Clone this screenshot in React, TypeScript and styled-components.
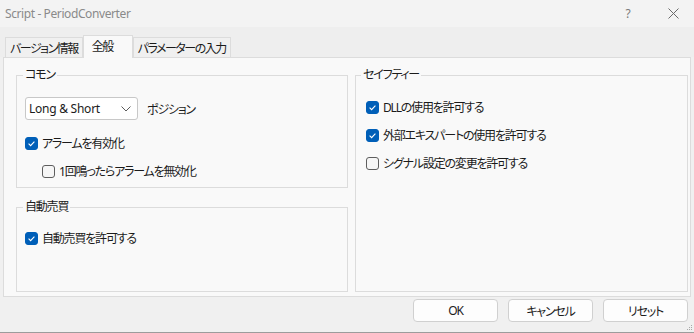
import React from 'react'
import styled, { createGlobalStyle } from 'styled-components'

const GlobalStyle = createGlobalStyle`
    html, body {
        margin: 0;
        padding: 0;
        background: #f0f0f0;
    }
    body {
        font-family: 'Noto Sans', 'Noto Sans CJK JP', sans-serif;
        font-size: 12px;
        color: #1b1b1b;
        font-feature-settings: 'palt';
        letter-spacing: -1.2px;
    }
`

function CheckMark() {
    return (
        <svg width='13' height='13' viewBox='0 0 13 13'>
            <path d='M3.6 6.7 L5.6 8.6 L9.4 4.6' fill='none' stroke='#fff' strokeWidth='1.1' />
        </svg>
    )
}

function Check(props: { checked?: boolean; label: string; top?: number; indent?: number }) {
    return (
        <CheckRow $top={props.top ?? 0} $indent={props.indent ?? 0}>
            <Box $checked={!!props.checked}>{props.checked && <CheckMark />}</Box>
            <span>{props.label}</span>
        </CheckRow>
    )
}

export default function App() {
    return (
        <>
            <GlobalStyle />
            <Window>
                <TitleBar>
                    <Title>Script - PeriodConverter</Title>
                    <Help>?</Help>
                    <Close>
                        <svg width='11' height='11' viewBox='0 0 11 11'>
                            <path d='M0.5 0.5 L10.5 10.5 M10.5 0.5 L0.5 10.5' stroke='#6a6a6a' strokeWidth='1' />
                        </svg>
                    </Close>
                </TitleBar>

                <TabStrip>
                    <Tab>バージョン情報</Tab>
                    <Tab $active>全般</Tab>
                    <Tab>パラメーターの入力</Tab>
                </TabStrip>

                <Panel>
                    <Column>
                        <Group $height={121}>
                            <Legend>コモン</Legend>
                            <GroupBody $padTop={14} $inset={8}>
                                <SelectRow>
                                    <Select>
                                        <SelectText>Long &amp; Short</SelectText>
                                        <svg width='10' height='6' viewBox='0 0 10 6'>
                                            <path d='M0.5 0.5 L5 5 L9.5 0.5' fill='none' stroke='#5c5c5c' strokeWidth='1' />
                                        </svg>
                                    </Select>
                                    <span>ポジション</span>
                                </SelectRow>
                                <Check checked label='アラームを有効化' top={15} />
                                <Check label='1回鳴ったらアラームを無効化' top={12} indent={17} />
                            </GroupBody>
                        </Group>
                        <Group $grow>
                            <Legend>自動売買</Legend>
                            <GroupBody $padTop={15} $inset={8}>
                                <Check checked label='自動売買を許可する' />
                            </GroupBody>
                        </Group>
                    </Column>
                    <Group $grow>
                        <Legend $shift={5}>セイフティー</Legend>
                        <GroupBody $padTop={16} $inset={10} $gap={12}>
                            <Check checked label='DLLの使用を許可する' />
                            <Check checked label='外部エキスパートの使用を許可する' />
                            <Check label='シグナル設定の変更を許可する' />
                        </GroupBody>
                    </Group>
                </Panel>

                <ButtonBar>
                    <Button>OK</Button>
                    <Button>キャンセル</Button>
                    <Button>リセット</Button>
                </ButtonBar>

                <Grip>
                    <svg width='6' height='6' viewBox='0 0 6 6'>
                        <rect x='4' y='0' width='1' height='1' fill='#a8a8a8' />
                        <rect x='2' y='2' width='1' height='1' fill='#a8a8a8' />
                        <rect x='4' y='2' width='1' height='1' fill='#a8a8a8' />
                        <rect x='0' y='4' width='1' height='1' fill='#a8a8a8' />
                        <rect x='2' y='4' width='1' height='1' fill='#a8a8a8' />
                        <rect x='4' y='4' width='1' height='1' fill='#a8a8a8' />
                    </svg>
                </Grip>
            </Window>
        </>
    )
}

const Window = styled('div')`
    position: relative;
    display: flex;
    flex-direction: column;
    width: 694px;
    height: 333px;
    box-sizing: border-box;
    background: #f0f0f0;
    border-bottom: 1px solid #9c9c9c;
    overflow: hidden;
`

const TitleBar = styled('div')`
    display: flex;
    align-items: center;
    height: 27px;
    flex-shrink: 0;
    padding-left: 5px;
    background: #f3f3f3;
`

const Title = styled('div')`
    flex: 1;
    color: #8a8a8a;
    font-size: 12px;
    letter-spacing: -0.4px;
`

const Help = styled('div')`
    width: 12px;
    margin-right: 34px;
    color: #7a7a7a;
    text-align: center;
    letter-spacing: 0;
`

const Close = styled('div')`
    display: flex;
    margin-right: 15px;
`

const TabStrip = styled('div')`
    display: flex;
    align-items: flex-end;
    height: 30px;
    flex-shrink: 0;
    padding-left: 5px;
    background: #eeeeee;
    letter-spacing: -1.5px;
`

const Tab = styled('div')<{ $active?: boolean }>`
    position: relative;
    z-index: 1;
    box-sizing: border-box;
    height: ${({ $active }) => ($active ? 23 : 20)}px;
    margin-bottom: ${({ $active }) => ($active ? -1 : 0)}px;
    padding: ${({ $active }) => ($active ? '1px 19px 0 8px' : '0 4px 0 4px')};
    display: flex;
    align-items: ${({ $active }) => ($active ? 'flex-start' : 'center')};
    border: 1px solid #dcdcdc;
    border-bottom: none;
    background: ${({ $active }) => ($active ? '#f9f9f9' : '#f0f0f0')};
    white-space: nowrap;
`

const Panel = styled('div')`
    display: grid;
    grid-template-columns: 332px 333px;
    column-gap: 7px;
    height: 240px;
    box-sizing: border-box;
    flex-shrink: 0;
    margin: 0 3px;
    padding: 9px 2px 4px 12px;
    border: 1px solid #dcdcdc;
    background: #f9f9f9;
`

const Column = styled('div')`
    display: flex;
    flex-direction: column;
    gap: 11px;
`

const Group = styled('fieldset')<{ $height?: number; $grow?: boolean }>`
    display: block;
    min-width: 0;
    margin: 0;
    padding: 0;
    box-sizing: border-box;
    height: ${({ $height }) => ($height ? `${$height}px` : 'auto')};
    flex: ${({ $grow }) => ($grow ? 1 : 'none')};
    border: 1px solid #dcdcdc;
`

const Legend = styled('legend')<{ $shift?: number }>`
    margin-left: ${({ $shift }) => $shift ?? 6}px;
    padding: 0 2px;
    line-height: 16px;
`

const GroupBody = styled('div')<{ $padTop: number; $inset: number; $gap?: number }>`
    display: flex;
    flex-direction: column;
    gap: ${({ $gap }) => $gap ?? 0}px;
    padding: ${({ $padTop, $inset }) => `${$padTop}px ${$inset}px 0`};
`

const SelectRow = styled('div')`
    display: flex;
    align-items: center;
    gap: 9px;
`

const Select = styled('div')`
    display: flex;
    align-items: center;
    justify-content: space-between;
    box-sizing: border-box;
    width: 113px;
    height: 23px;
    padding: 0 6px 0 3px;
    border: 1px solid #c8c8c8;
    border-radius: 3px;
    background: #ffffff;
`

const SelectText = styled('span')`
    letter-spacing: -0.25px;
`

const CheckRow = styled('div')<{ $top: number; $indent: number }>`
    display: flex;
    align-items: center;
    gap: 4px;
    height: 16px;
    margin-top: ${({ $top }) => $top}px;
    margin-left: ${({ $indent }) => $indent}px;
    white-space: nowrap;
`

const Box = styled('div')<{ $checked: boolean }>`
    display: flex;
    box-sizing: border-box;
    width: 13px;
    height: 13px;
    border-radius: 3px;
    border: 1px solid ${({ $checked }) => ($checked ? '#005fb8' : '#5e5e5e')};
    background: ${({ $checked }) => ($checked ? '#005fb8' : '#f6f6f6')};

    svg {
        margin: -1px;
    }
`

const ButtonBar = styled('div')`
    display: flex;
    justify-content: flex-end;
    gap: 10px;
    padding: 2px 6px 0 0;
`

const Button = styled('div')`
    display: flex;
    align-items: center;
    justify-content: center;
    box-sizing: border-box;
    width: 85px;
    height: 23px;
    border: 1px solid #d0d0d0;
    border-radius: 4px;
    background: #fdfdfd;
`

const Grip = styled('div')`
    position: absolute;
    right: 1px;
    bottom: 1px;
    display: flex;
`
